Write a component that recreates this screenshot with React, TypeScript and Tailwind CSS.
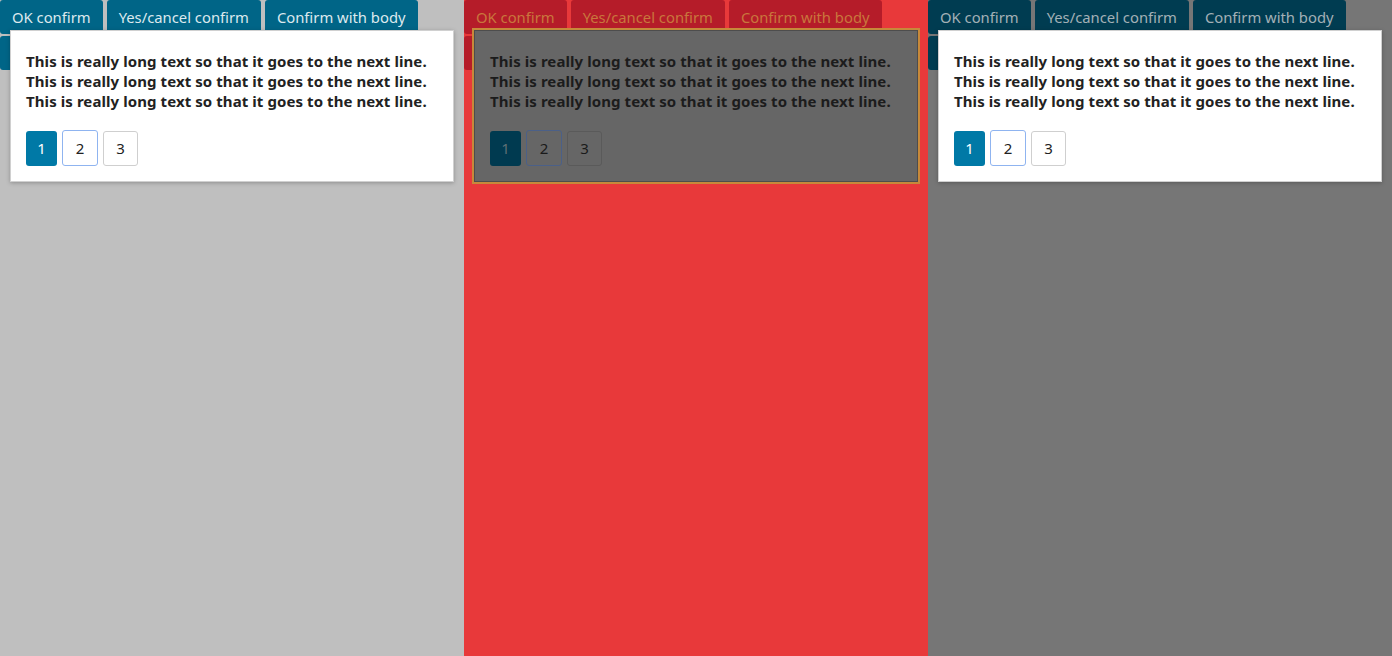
import React from "react";

type Theme = {
  bg: string;
  btn: string;
  btnText: string;
  p1: string;
  p1Text: string;
  p2: string;
  p3: string;
  numText: string;
  text: string;
};

const LINE = "This is really long text so that it goes to the next line.";

function Column({ t, mid }: { t: Theme; mid?: boolean }) {
  return (
    <div className={`relative w-[464px] h-[656px] ${t.bg}`}>
      <div className="flex flex-col gap-y-[2px]">
        <div className="flex gap-x-[4px]">
          {["OK confirm", "Yes/cancel confirm", "Confirm with body"].map((l) => (
            <div
              key={l}
              className={`h-[34px] px-[12px] pt-px flex items-center rounded-[3px] text-[14.8px] whitespace-nowrap ${t.btn} ${t.btnText}`}
            >
              {l}
            </div>
          ))}
        </div>
        <div className="flex">
          <div className={`h-[34px] w-[120px] rounded-[3px] ${t.btn}`} />
        </div>
      </div>
      <div
        className={`absolute left-[10px] top-[30px] w-[444px] h-[152px] border ${
          mid
            ? "bg-[#666666] border-[#4d4d4d] outline-2 outline-[#c7893a]"
            : "bg-white border-[#d0d0d0] shadow-[0_1px_4px_rgba(0,0,0,0.25)]"
        } px-[15px] pt-[20px]`}
      >
        <div className={`text-[15px] leading-[20px] font-bold tracking-[0.08px] ${t.text}`}>
          <div>{LINE}</div>
          <div>{LINE}</div>
          <div>{LINE}</div>
        </div>
        <div className="flex gap-[5px] mt-[20px] text-[15px]">
          <div className={`w-[31px] h-[35px] rounded-[3px] flex items-center justify-center ${t.p1} ${t.p1Text}`}>1</div>
          <div className={`w-[36px] h-[36px] -mt-px rounded-[3px] border-[1.5px] flex items-center justify-center ${t.p2} ${t.numText}`}>2</div>
          <div className={`w-[35px] h-[35px] rounded-[3px] border flex items-center justify-center ${t.p3} ${t.numText}`}>3</div>
        </div>
      </div>
    </div>
  );
}

export default function App() {
  const left: Theme = {
    bg: "bg-[#bfbfbf]",
    btn: "bg-[#006587]",
    btnText: "text-[#dde9ee]",
    p1: "bg-[#0079a6]",
    p1Text: "text-white",
    p2: "border-[#8fb4f0]",
    p3: "border-[#cfcfcf]",
    numText: "text-[#222]",
    text: "text-[#222222]",
  };
  const middle: Theme = {
    bg: "bg-[#e8393a]",
    btn: "bg-[#b51c29]",
    btnText: "text-[#c9763c]",
    p1: "bg-[#003a50]",
    p1Text: "text-[#5f6f75]",
    p2: "border-[#4b6088]",
    p3: "border-[#5a5a5a]",
    numText: "text-[#1a1a1a]",
    text: "text-[#1c1c1c]",
  };
  const right: Theme = {
    bg: "bg-[#767676]",
    btn: "bg-[#003c51]",
    btnText: "text-[#a3b0b6]",
    p1: "bg-[#0079a6]",
    p1Text: "text-white",
    p2: "border-[#8fb4f0]",
    p3: "border-[#cfcfcf]",
    numText: "text-[#222]",
    text: "text-[#222222]",
  };
  return (
    <div className="flex w-[1392px] h-[656px] overflow-hidden" style={{ fontFamily: '"Noto Sans", "Open Sans", sans-serif' }}>
      <Column t={left} />
      <Column t={middle} mid />
      <Column t={right} />
    </div>
  );
}
